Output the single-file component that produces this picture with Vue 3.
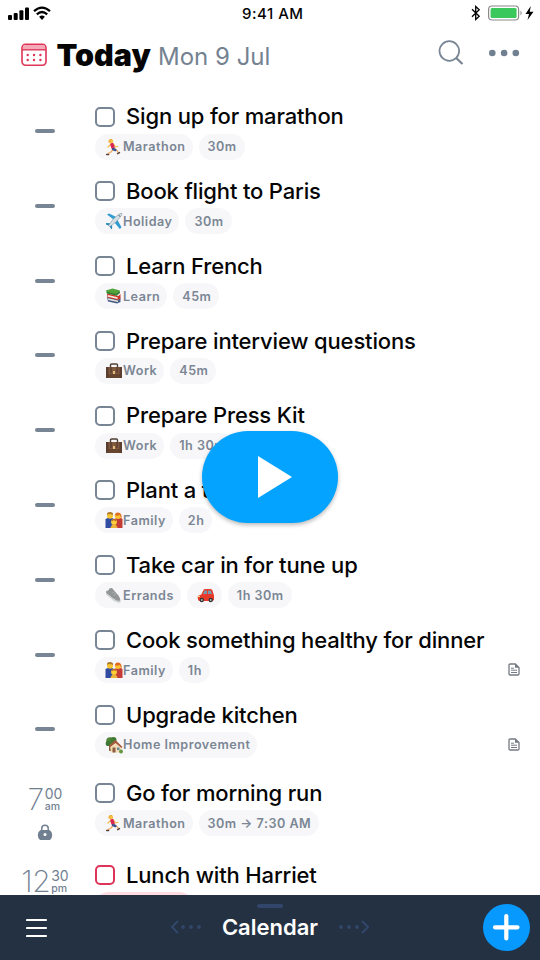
<script setup>
const rows = [
  { title: 'Sign up for marathon', chips: [{ i: 'run', t: 'Marathon' }, { t: '30m' }] },
  { title: 'Book flight to Paris', chips: [{ i: 'plane', t: 'Holiday' }, { t: '30m' }] },
  { title: 'Learn French', chips: [{ i: 'books', t: 'Learn' }, { t: '45m' }] },
  { title: 'Prepare interview questions', chips: [{ i: 'case', t: 'Work' }, { t: '45m' }] },
  { title: 'Prepare Press Kit', chips: [{ i: 'case', t: 'Work' }, { t: '1h 30m' }] },
  { title: 'Plant a tree', chips: [{ i: 'family', t: 'Family' }, { t: '2h' }] },
  { title: 'Take car in for tune up', chips: [{ i: 'shoe', t: 'Errands' }, { i: 'car' }, { t: '1h 30m' }] },
  { title: 'Cook something healthy for dinner', note: true, chips: [{ i: 'family', t: 'Family' }, { t: '1h' }] },
  { title: 'Upgrade kitchen', note: true, tall: true, chips: [{ i: 'house', t: 'Home Improvement' }] },
  { title: 'Go for morning run', h: '7', m: '00', ap: 'am', lock: true, taller: true, chips: [{ i: 'run', t: 'Marathon' }, { t: '30m → 7:30 AM' }] },
  { title: 'Lunch with Harriet', h: '12', m: '30', ap: 'pm', red: true, chips: [{ blank: true }] },
]
</script>

<template>
  <div class="phone">
    <div class="status">
      <svg class="signal" width="44" height="16" viewBox="0 0 44 16">
        <g fill="#000"><rect x="0" y="10" width="4" height="5" rx="1" /><rect x="5.7" y="8" width="4" height="7" rx="1" /><rect x="11.4" y="5.3" width="4" height="9.7" rx="1" /><rect x="17" y="2.5" width="4" height="12.5" rx="1" /></g>
        <g fill="none" stroke="#000" stroke-width="2.3"><path d="M26 6.2Q34 -1 42 6.2" /><path d="M28.8 9.3Q34 4.8 39.2 9.3" /></g>
        <path d="M31.1 11.8Q34 9.2 36.900 11.8L34 15Z" />
      </svg>
      <span class="clock">9:41 AM</span>
      <svg class="power" width="66" height="18" viewBox="0 0 66 18">
        <path d="M2 5.2L9.200 12.300L5.700 15.500V2.500L9.200 5.700L2 12.800" fill="none" stroke="#000" stroke-width="1.3" />
        <rect x="18.600" y="2" width="30" height="14" rx="3.500" fill="#fff" stroke="#8a8a8a" stroke-width="1.200" />
        <rect x="20.600" y="4" width="26" height="10" rx="1.500" fill="#3ac75b" />
        <path d="M50.500 6.500Q53 9 50.500 11.500Z" fill="#8a8a8a" />
        <path d="M60.800 2L55.500 10H59L57.500 16L63.500 7.700H59.700Z" />
      </svg>
    </div>

    <header class="header">
      <svg class="cal" width="26" height="24" viewBox="0 0 26 24">
        <rect x="1" y="1.200" width="24" height="21" rx="3.600" fill="#fff" stroke="#df3455" stroke-width="1.600" />
        <path d="M2 5V4Q2 2 4.500 2H21.500Q24 2 24 4V6H2Z" fill="#f3a9b7" />
        <path d="M1 6.800H25" stroke="#df3455" stroke-width="1.400" />
        <g fill="#df3455"><circle cx="6.700" cy="12" r="1.200" /><circle cx="13" cy="12" r="1.200" /><circle cx="19.400" cy="12" r="1.200" /><circle cx="6.700" cy="17" r="1.200" /><circle cx="13" cy="17" r="1.200" /><circle cx="19.400" cy="17" r="1.200" /></g>
      </svg>
      <h1>Today</h1>
      <span class="date">Mon 9 Jul</span>
      <svg class="tools" width="84" height="30" viewBox="0 0 84 30">
        <g fill="none" stroke="#788594"><circle cx="11.300" cy="13" r="9.800" stroke-width="1.700" /><path d="M18.200 20L24.500 26" stroke-width="2.200" /></g>
        <g fill="#718091"><circle cx="54.300" cy="15" r="3.300" /><circle cx="66.100" cy="15" r="3.300" /><circle cx="77.800" cy="15" r="3.300" /></g>
      </svg>
    </header>

    <main class="list">
      <section v-for="row in rows" :key="row.title" class="row" :class="{ tall: row.tall, taller: row.taller }">
        <div class="when" :class="{ timed: row.h }">
          <template v-if="row.h">
            <div class="time">
              <span class="hour">{{ row.h }}</span>
              <span class="side"><span class="minute">{{ row.m }}</span><span class="ampm">{{ row.ap }}</span></span>
            </div>
            <svg v-if="row.lock" class="lock" width="16" height="17" viewBox="0 0 16 17">
              <path d="M4.800 7V4.200Q4.800 1.200 8 1.200T11.200 4.200V7" fill="none" stroke="#718091" stroke-width="1.500" />
              <path d="M3.500 6H12.500Q15.200 7.500 15.200 11Q15.200 14.500 13 16H3Q.800 14.500 .800 11Q.800 7.500 3.500 6Z" fill="#718091" />
              <circle cx="8" cy="10.500" r="1.500" fill="#fff" />
            </svg>
          </template>
          <i v-else class="dash"></i>
        </div>
        <div class="task">
          <div class="head"><i class="box" :class="{ red: row.red }"></i><span class="title">{{ row.title }}</span></div>
          <div class="chips">
            <span v-for="(c, n) in row.chips" :key="n" class="chip" :class="{ icon: c.i, pink: c.blank }">
              <svg v-if="c.i" class="emoji" width="18" height="18" viewBox="0 0 18 18">
                <g v-if="c.i === 'run'" fill="none" stroke-linecap="round" stroke-linejoin="round">
                  <path d="M8 11.500L6 14L2.800 15.800" stroke="#f0a864" stroke-width="1.300" />
                  <path d="M9.500 11L12.300 12.800L13.300 15" stroke="#f0a864" stroke-width="1.300" />
                  <path d="M5.800 6.500L3 9M8.500 6L10.700 9L13 8.300" stroke="#f8bb45" stroke-width="1.200" />
                  <path d="M7 6.500L8 9.500" stroke="#d82755" stroke-width="3.600" />
                  <path d="M8 11.200L10.300 12" stroke="#37538f" stroke-width="2.400" />
                  <circle cx="6" cy="3.300" r="2.100" fill="#f9bd45" />
                  <path d="M4 4.200Q3.500 1.200 6.800 1.500" stroke="#e9ac37" stroke-width="1.100" />
                  <path d="M1.700 16.500H3.600M12.700 15.600L14.400 14.600" stroke="#59443d" stroke-width="1.600" />
                </g>
                <g v-else-if="c.i === 'plane'">
                  <path d="M2 2.500L4 1.500L13.500 6L10.500 9ZM9 10L12 7L16.500 15.300L14.800 17Z" fill="#329bd0" />
                  <path d="M1 11L5 11.300L7.200 13.500L7 17.200L5.800 16.500L4.200 13.800L1 12.500Z" fill="#2489bd" />
                  <path d="M3.500 13.500Q8 6 14 2.200Q16.500 .6 17 1.500Q17.300 2.800 15.300 5Q11 11 5 14.500Z" fill="#d5dfe5" stroke="#8498a5" stroke-width=".6" />
                  <path d="M13.500 3.200L15.300 4.500" stroke="#526270" />
                </g>
                <g v-else-if="c.i === 'books'">
                  <path d="M2 10L13.500 12.500L15.500 10.500V15L12 16.500L3 14.500Z" fill="#465d88" />
                  <path d="M3 11.200L13 13.400V15.100L3.300 13Z" fill="#e8e6dc" />
                  <path d="M2 6.500L13.500 9L15.500 7V11.500L12.500 13L2.500 10.500Z" fill="#cf3427" />
                  <path d="M3 8L12.600 10.200V11.900L3 9.700Z" fill="#f2eadd" />
                  <path d="M.8 3.500L7.500 1.500L15 3.500L11.500 8L2 5.800Z" fill="#52a43b" />
                  <path d="M1.500 4.700L11 7L15 3.900V6L11.500 8.700L1.800 6.500Z" fill="#327c32" />
                </g>
                <g v-else-if="c.i === 'case'">
                  <path d="M5.500 5.200V3Q5.500 2 6.700 2H11.300Q12.500 2 12.500 3V5.200" fill="none" stroke="#514034" stroke-width="1.400" />
                  <path d="M1 5H17V15Q17 16 16 16H2Q1 16 1 15Z" fill="#80593e" /><path d="M1 12H17V16H1Z" fill="#68452f" />
                  <path d="M1 5H3.500V16H1ZM14.500 5H17V16H14.500Z" fill="#5a3e30" />
                  <path d="M6 5V11M12 5V11" stroke="#49342a" />
                  <path d="M8 9H10V12H8Z" fill="#e1bd7b" />
                </g>
                <g v-else-if="c.i === 'family'">
                  <path d="M.5 8Q5 5.500 9 8V17H.5Z" fill="#304ba1" /><path d="M9 8Q14 5.500 17.500 8V17H9Z" fill="#c43c37" />
                  <circle cx="5" cy="4.800" r="3" fill="#f7c331" /><circle cx="13" cy="5" r="3" fill="#f7c331" />
                  <path d="M2 4Q1.500 1 5 1T8 4Q4 2 2 4Z" fill="#ac782b" />
                  <path d="M9.800 7Q9 1.500 13 1.500Q17.500 2 16.500 8Q15.500 6 15 3.700Q12 5.500 10 4Z" fill="#e06c23" />
                  <circle cx="9" cy="11" r="2.900" fill="#ffce3b" /><path d="M5.500 17Q6 13.500 9 13.500T12.500 17Z" fill="#ecb33a" />
                  <path d="M6.800 10Q8 7.500 11 9.500" fill="none" stroke="#a65e27" stroke-width="1.200" />
                </g>
                <g v-else-if="c.i === 'shoe'">
                  <path d="M1.500 4.500Q3.500 5.500 4.300 2.500L7 2L13.800 10Q16.300 14.500 14.800 15.700Q12 16 8 12.500L1 7Z" fill="#939697" />
                  <path d="M1 6.700Q6 11 10 13.500Q13.500 15.500 15.300 14.500V16.700Q11 17 6.500 13L1 8.500Z" fill="#cfd2d3" />
                  <path d="M7.300 7.300L9 5.500M9 9.500L11 7.700" stroke="#b4b7b8" />
                </g>
                <g v-else-if="c.i === 'car'">
                  <path d="M.8 10L4.300 8.500L6.500 4Q7 3 8.500 3H13.500Q15 3 15.500 4.500L17 9.500V14Q16 15 14 15H2Q.5 14 .8 10Z" fill="#e83a2b" />
                  <path d="M6 8L7.600 4.500H10V8ZM11 4.500H13.800L15 8H11Z" fill="#7798ac" />
                  <circle cx="4.800" cy="14" r="2.200" fill="#333" /><circle cx="13.700" cy="14" r="2.200" fill="#333" />
                  <circle cx="4.800" cy="14" r=".9" fill="#bbb" /><circle cx="13.700" cy="14" r=".9" fill="#bbb" />
                  <path d="M1 10.500H3" stroke="#ffd76c" />
                </g>
                <g v-else>
                  <path d="M4 7H6V15H4Z" fill="#8c6038" />
                  <circle cx="5" cy="5" r="3.800" fill="#50863b" /><circle cx="8.500" cy="4" r="3" fill="#437933" /><circle cx="3.300" cy="7.500" r="2.600" fill="#3e7634" />
                  <path d="M5 9L11 5L16.500 10.500V16.500H6Z" fill="#f0ddb8" />
                  <path d="M4 9.500L10.500 4L17.500 11L16.500 12L10.500 7L5.300 11Z" fill="#a4583d" />
                  <path d="M7.500 11.500H10.500V16.500H7.500Z" fill="#8f5a3e" /><path d="M12 11.500H14.500V14H12Z" fill="#67889e" />
                  <circle cx="16" cy="15.500" r="2" fill="#659841" />
                </g>
              </svg>{{ c.t }}
            </span>
          </div>
        </div>
        <svg v-if="row.note" class="note" width="12" height="13" viewBox="0 0 12 13">
          <path d="M1 2.200Q1 1 2.200 1H7.300L11 4.500V10.800Q11 12 9.800 12H2.200Q1 12 1 10.800Z" fill="#fff" stroke="#747a84" stroke-width="1.300" />
          <path d="M7 1V4.800H11Z" fill="#747a84" /><path d="M3 5.200H6M3 7.200H9M3 9.500H9" stroke="#747a84" stroke-width="1" />
        </svg>
      </section>
    </main>

    <nav class="bar">
      <svg class="menu" width="22" height="20" viewBox="0 0 22 20"><path d="M1 2H20M1 10H20M1 18H20" stroke="#fff" stroke-width="2.200" stroke-linecap="round" /></svg>
      <svg class="prev" width="32" height="16" viewBox="0 0 32 16"><path d="M8 2L2 8L8 14" fill="none" stroke="#31476a" stroke-width="2" /><g fill="#31476a"><circle cx="13" cy="8" r="1.900" /><circle cx="21" cy="8" r="1.900" /><circle cx="29" cy="8" r="1.900" /></g></svg>
      <div class="center"><i class="grab"></i><span>Calendar</span></div>
      <svg class="next" width="32" height="16" viewBox="0 0 32 16"><path d="M24 2L30 8L24 14" fill="none" stroke="#31476a" stroke-width="2" /><g fill="#31476a"><circle cx="3" cy="8" r="1.900" /><circle cx="11" cy="8" r="1.900" /><circle cx="19" cy="8" r="1.900" /></g></svg>
      <button class="add" aria-label="Add"><svg width="47" height="47" viewBox="0 0 47 47"><path d="M12 23.300H34.500M23.300 12V34.500" stroke="#fff" stroke-width="4.200" stroke-linecap="round" /></svg></button>
    </nav>

    <button class="play" aria-label="Play"><svg width="34" height="42" viewBox="0 0 34 42"><path d="M0 0L34 21L0 42Z" fill="#fff" /></svg></button>
  </div>
</template>

<style>
body { margin: 0; background: #fff; }
</style>

<style scoped>
.phone { position: relative; width: 540px; height: 960px; overflow: hidden; display: flex; flex-direction: column; background: #fff; font-family: Inter, "Liberation Sans", sans-serif; color: #050506; }
i, svg { display: block; flex-shrink: 0; }
button { border: 0; padding: 0; margin: 0; }
.status { height: 28px; display: grid; grid-template-columns: 1fr auto 1fr; align-items: center; padding: 0 4px 0 8px; box-sizing: border-box; flex-shrink: 0; }
.signal { margin-top: -3px; }
.clock { font-size: 15px; font-weight: 500; letter-spacing: .5px; margin: -1px 0 0 1.500px; }
.power { justify-self: end; margin-top: -2px; }
.header { height: 64px; flex-shrink: 0; display: flex; align-items: flex-start; padding: 10px 18px 0 20px; box-sizing: border-box; }
.cal { margin: 4.500px 0 0 .500px; }
h1 { margin: 0 0 0 10px; font-size: 30.500px; line-height: 34px; font-weight: 900; letter-spacing: 0; width: 101.500px; white-space: nowrap; }
.date { font-size: 24px; line-height: 38px; color: #748291; letter-spacing: 0; white-space: nowrap; }
.tools { margin-left: auto; }
.list { height: 803px; overflow: hidden; flex-shrink: 0; }
.row { height: 74.800px; display: grid; grid-template-columns: 95px 1fr auto; }
.tall { height: 78.500px; }
.taller { height: 82px; }
.when { padding: 37px 0 0 35px; }
.when.timed { padding: 17px 0 0; display: flex; flex-direction: column; align-items: center; width: 90px; }
.dash { width: 20px; height: 4px; border-radius: 2px; background: #788594; }
.time { display: flex; height: 27px; color: #718091; gap: 1px; }
.hour { font-size: 30px; line-height: 27px; font-weight: 250; letter-spacing: -.5px; }
.side { display: flex; flex-direction: column; padding-top: 1px; }
.minute { font-size: 14px; line-height: 13px; }
.ampm { font-size: 10.500px; line-height: 13px; font-weight: 500; }
.lock { margin-top: 11px; }
.task { padding-top: 11.500px; min-width: 0; }
.head { display: flex; align-items: center; height: 26px; gap: 11px; }
.box { width: 20px; height: 20px; border: 2px solid #788594; border-radius: 5px; box-sizing: border-box; }
.box.red { border-color: #df3459; }
.title { font-size: 22px; line-height: 26px; font-weight: 500; letter-spacing: -.16px; white-space: nowrap; margin-top: -.500px; }
.chips { display: flex; gap: 6px; margin-top: 4px; }
.chip { height: 26px; box-sizing: border-box; display: flex; align-items: center; padding: 0 8px 0 9px; border-radius: 13px; background: #f7f7f9; color: #7b8694; font-size: 12.600px; font-weight: 600; letter-spacing: .5px; white-space: nowrap; }
.chip.icon { padding: 0 7px 0 10px; }
.chip.pink { width: 98px; background: #ffdce2; }
.note { margin: 47.500px 20px 0 0; }
.bar { height: 65px; flex-shrink: 0; display: flex; align-items: center; background: #243142; padding: 0 10px 0 26px; box-sizing: border-box; }
.prev { margin: -1px 0 0 122px; }
.next { margin-top: -1px; }
.center { width: 136px; height: 65px; display: flex; flex-direction: column; align-items: center; color: #fff; font-size: 22px; font-weight: 600; line-height: 26px; }
.grab { width: 26px; height: 4px; border-radius: 2px; background: #31466a; margin: 9px 0 6px; }
.add { margin-left: auto; width: 47px; height: 47px; border-radius: 50%; background: #0899ff; }
.play { position: absolute; left: 202px; top: 431px; width: 136px; height: 91.500px; border-radius: 46px; background: #03a3ff; box-shadow: 0 2px 4px rgba(0, 0, 0, .28); display: flex; align-items: center; justify-content: center; padding-left: 10px; }
</style>
